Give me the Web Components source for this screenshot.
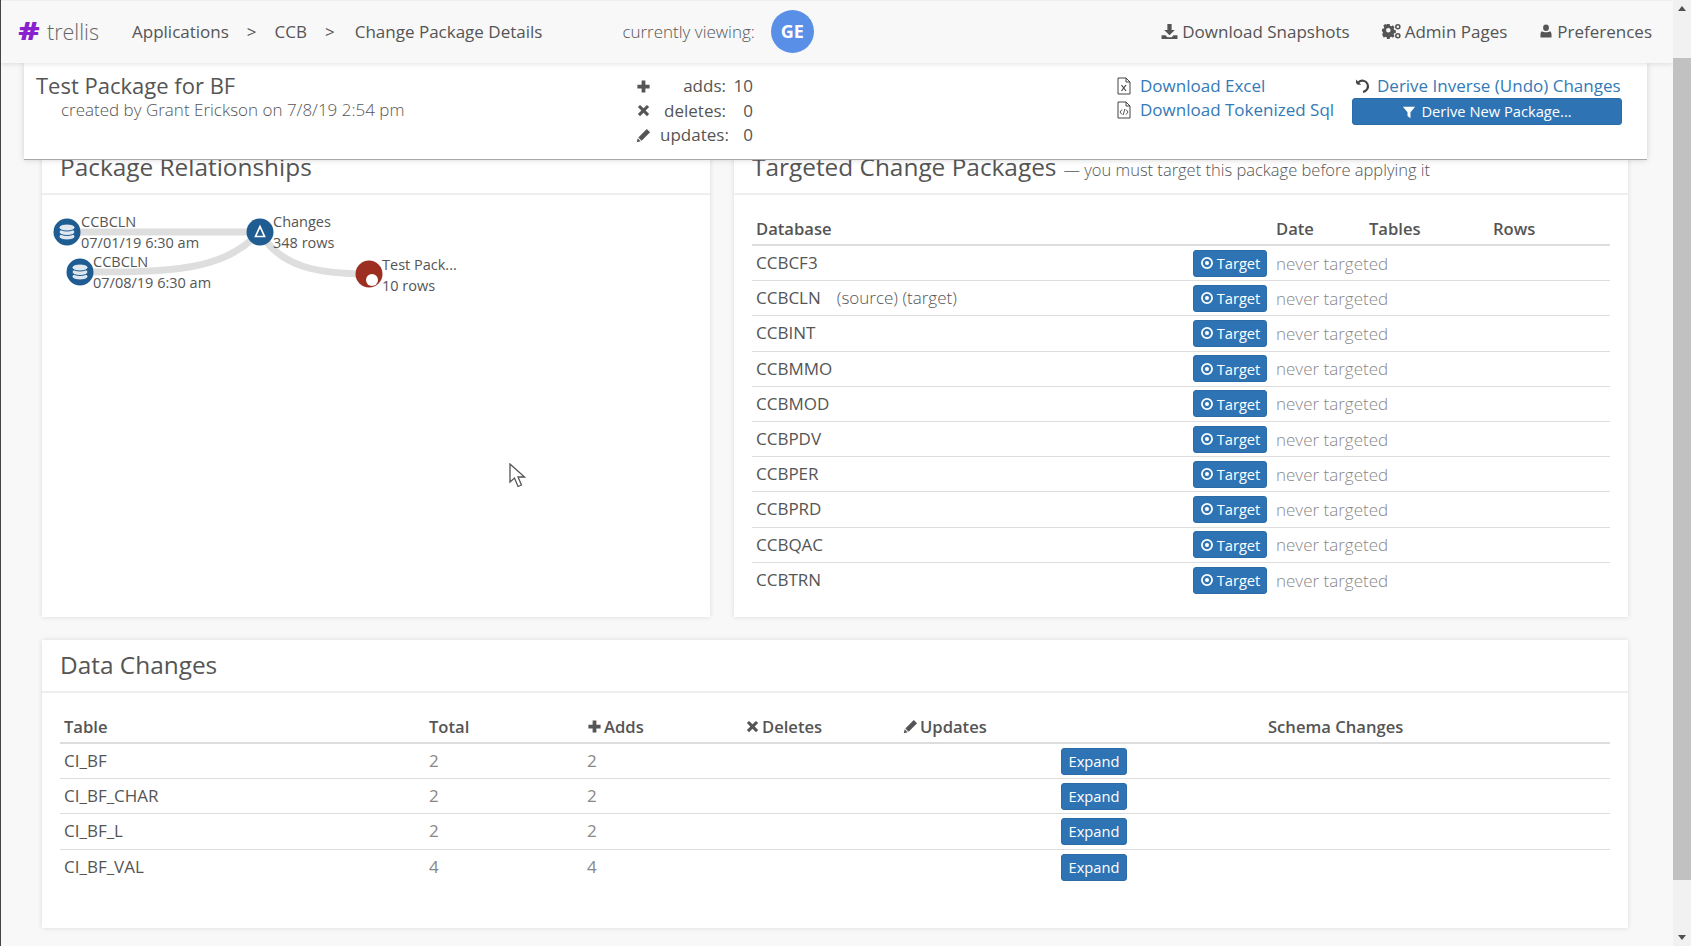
<!DOCTYPE html>
<html>
<head>
<meta charset="utf-8">
<title>Change Package Details</title>
<style>
  html, body { margin: 0; height: 100%; overflow: hidden; }
  body { background: #f8f8f8; font-family: "Open Sans", sans-serif; color: #555; }
</style>
</head>
<body>
<trellis-app></trellis-app>

<script>
const ICONS = {
  plus: `<svg viewBox="0 0 16 16"><path d="M6 1.5h4V6h4.5v4H10v4.5H6V10H1.500V6H6z"/></svg>`,
  times: `<svg viewBox="0 0 16 16"><path d="M4.300 2 8 5.700 11.700 2 14 4.300 10.300 8 14 11.700 11.700 14 8 10.300 4.300 14 2 11.700 5.700 8 2 4.300z"/></svg>`,
  pencil: `<svg viewBox="0 0 16 16"><path d="M11.500 1 15 4.500 6 13.500 2.500 10zM1.800 11 5 14.200.8 15.200z"/></svg>`,
  download: `<svg viewBox="0 0 16 16"><path d="M6 1h4v5.500h3L8 11.500 3 6.500h3zM.5 11.500h3.700L6 13.300h4l1.800-1.800h3.700V15H.5z"/></svg>`,
  gears: `<svg viewBox="0 0 18 16"><path fill-rule="evenodd" d="M5 3h2.600l.4 1.700 1.300.6 1.500-.9 1.700 1.800-.9 1.500.5 1.200 1.700.5v2.500l-1.700.4-.5 1.200.9 1.500-1.700 1.700-1.500-.9-1.300.5-.4 1.700H5l-.4-1.700-1.300-.5-1.500.9L.1 13.600l.9-1.500-.5-1.200L0 10.400V8l1.700-.5.5-1.200-.9-1.500L3 3l1.500.9zm1.300 4a2.200 2.200 0 1 0 0 4.500 2.200 2.200 0 0 0 0-4.500z" transform="translate(0 -2) scale(.95)"/><circle cx="15" cy="3.500" r="1.900" fill="none" stroke="currentColor" stroke-width="1.500"/><circle cx="15" cy="12" r="1.900" fill="none" stroke="currentColor" stroke-width="1.500"/></svg>`,
  user: `<svg viewBox="0 0 16 16"><ellipse cx="8" cy="4.300" rx="3.300" ry="3.800"/><path d="M3.500 8.300c1 .8 2.700 1.200 4.500 1.200s3.500-.4 4.500-1.200c1.200.5 1.800 2 1.800 3.700v3.500H1.700V12c0-1.700.6-3.200 1.800-3.700z"/></svg>`,
  undo: `<svg viewBox="0 0 16 16"><path d="M1 1.500 6.200 6.700H2.700L1 5z"/><path d="M3.500 4.200A5.600 5.600 0 1 1 8 13.800" fill="none" stroke="currentColor" stroke-width="2.200"/></svg>`,
  filter: `<svg viewBox="0 0 16 16"><path d="M1 2h14L9.700 8.300V15L6.300 12.500V8.300z"/></svg>`,
  target: `<svg viewBox="0 0 16 16"><circle cx="8" cy="8" r="5.800" fill="none" stroke="currentColor" stroke-width="2"/><circle cx="8" cy="8" r="2.300"/></svg>`,
  excel: `<svg viewBox="0 0 14 18"><path d="M1 1h8l4 4v12H1z" fill="none" stroke="currentColor"/><path d="M9 1v4h4" fill="none" stroke="currentColor"/><path d="M4.500 8l4.500 6M9 8l-4.500 6" fill="none" stroke="currentColor" stroke-width="1.200"/></svg>`,
  code: `<svg viewBox="0 0 14 18"><path d="M1 1h8l4 4v12H1z" fill="none" stroke="currentColor"/><path d="M9 1v4h4" fill="none" stroke="currentColor"/><path d="M5 8.500 3 11l2 2.500M9 8.500l2 2.500-2 2.500M7.800 8 6.200 14" fill="none" stroke="currentColor" stroke-width=".9"/></svg>`
};

class AppIcon extends HTMLElement {
  connectedCallback() {
    if (this.shadowRoot) return;
    const size = this.getAttribute("size") || 16;
    this.attachShadow({ mode: "open" }).innerHTML = `
      <style>
        :host { display: inline-flex; width: ${size}px; height: ${size}px; flex: none; }
        svg { width: 100%; height: 100%; fill: currentColor; display: block; }
      </style>
      ${ICONS[this.getAttribute("name")]}`;
  }
}

class BlueButton extends HTMLElement {
  constructor() {
    super();
    this.attachShadow({ mode: "open" }).innerHTML = `
      <style>
        :host {
          display: inline-flex; align-items: center; justify-content: center; gap: 3px;
          box-sizing: border-box; height: 27px; background: #2e74b5; border: 1px solid #2a6ba8;
          border-radius: 3px; color: #fff; font-size: 14.700px; white-space: nowrap;
        }
      </style>
      <slot></slot>`;
  }
}

class TopNav extends HTMLElement {
  constructor() {
    super();
    this.attachShadow({ mode: "open" }).innerHTML = `
      <style>
        :host {
          display: flex; align-items: center; height: 63px; box-sizing: border-box;
          padding: 0 21px 2px 18px; background: #f8f8f8; color: #555; font-size: 17px;
          border-top: 1px solid #eee; box-shadow: 0 1px 5px rgba(0,0,0,.12);
          position: relative; z-index: 3;
        }
        .hash { color: #8a1fd0; font-weight: 800; font-size: 24px; line-height: 1; width: 20px; text-align: center; transform: scaleX(1.35); }
        .name { margin-left: 8px; font-size: 21.500px; font-weight: 300; color: #666; width: 85px; }
        .crumbs { display: flex; }
        .sep { margin: 0 18px; }
        .sep + span + .sep { margin-right: 20px; }
        .viewing { margin-left: 80px; font-weight: 300; }
        .avatar {
          width: 43px; height: 43px; border-radius: 50%; background: #5a8fe8; color: #fff; margin-left: 16px;
          display: flex; align-items: center; justify-content: center; font-weight: 700; font-size: 18px;
        }
        .right { margin-left: auto; display: flex; gap: 32px; }
        .right span { display: inline-flex; align-items: center; gap: 4px; }
      </style>
      <span class="hash">#</span><span class="name">trellis</span>
      <span class="crumbs">
        <span>Applications</span><span class="sep">&gt;</span><span>CCB</span><span class="sep">&gt;</span><span>Change Package Details</span>
      </span>
      <span class="viewing">currently viewing:</span>
      <span class="avatar">GE</span>
      <span class="right">
        <span><app-icon name="download" size="17"></app-icon>Download Snapshots</span>
        <span><app-icon name="gears" size="19"></app-icon>Admin Pages</span>
        <span><app-icon name="user" size="14"></app-icon>Preferences</span>
      </span>`;
  }
}

class PackageSummary extends HTMLElement {
  constructor() {
    super();
    this.attachShadow({ mode: "open" }).innerHTML = `
      <style>
        :host {
          display: grid; grid-template-columns: 600px 480px 236px 270px; align-content: start;
          box-sizing: border-box; height: 97px; margin: 0 26px 0 23px; padding: 11px 0 0 12px;
          background: #fff; border-bottom: 1px solid #aaa; box-shadow: 0 0 6px rgba(0,0,0,.16);
          position: relative; z-index: 2; font-size: 17px; line-height: 24.500px;
        }
        h1 { margin: 0; font-size: 22px; font-weight: 400; color: #555; line-height: 23px; }
        p { margin: 1px 0 0 25px; font-weight: 300; color: #555; }
        .stats { display: grid; grid-template-columns: 24px 66px 27px; justify-content: start; text-align: right; }
        .stats app-icon { align-self: center; }
        .links a { display: flex; align-items: center; gap: 6px; color: #337ab7; white-space: nowrap; height: 24px; }
        .links a app-icon { color: #444; margin-left: -1px; margin-right: 1px; }
        .undo { gap: 6px !important; padding-left: 3px; }
        .undo app-icon { margin: 0 !important; }
        blue-button { width: 270px; display: flex; gap: 5px; }
      </style>
      <div><h1>Test Package for BF</h1><p>created by Grant Erickson on 7/8/19 2:54 pm</p></div>
      <div class="stats">
        <app-icon name="plus" size="15"></app-icon><span>adds:</span><span>10</span>
        <app-icon name="times" size="15"></app-icon><span>deletes:</span><span>0</span>
        <app-icon name="pencil" size="15"></app-icon><span>updates:</span><span>0</span>
      </div>
      <div class="links">
        <a><app-icon name="excel" size="18"></app-icon>Download Excel</a>
        <a><app-icon name="code" size="18"></app-icon>Download Tokenized Sql</a>
      </div>
      <div class="links">
        <a class="undo"><app-icon name="undo" size="16"></app-icon>Derive Inverse (Undo) Changes</a>
        <blue-button><app-icon name="filter" size="14"></app-icon>Derive New Package...</blue-button>
      </div>`;
  }
}

class PanelCard extends HTMLElement {
  constructor() {
    super();
    this.attachShadow({ mode: "open" }).innerHTML = `
      <style>
        :host {
          display: block; box-sizing: border-box; background: #fff; overflow: hidden;
          box-shadow: 0 0 5px rgba(0,0,0,.12);
        }
        header {
          height: 53px; box-sizing: border-box; padding: 0 18px 2px; border-bottom: 2px solid #eee;
          display: flex; align-items: center; gap: 7px; color: #555; font-size: 24.400px; font-weight: 400;
        }
        ::slotted([slot=note]) { font-size: 16.500px; font-weight: 300; color: #555; padding-top: 5px; }
      </style>
      <header><slot name="title"></slot><slot name="note"></slot></header>
      <slot></slot>`;
  }
}

class RelationshipGraph extends HTMLElement {
  constructor() {
    super();
    const db = (x, y) => `
      <circle cx="${x}" cy="${y}" r="13.500" fill="#1f5c92"/>
      <g fill="#dfe8f0" stroke="#1f5c92" stroke-width="1">
        <ellipse cx="${x}" cy="${y + 4.500}" rx="8" ry="3.500"/>
        <ellipse cx="${x}" cy="${y}" rx="8" ry="3.500"/>
        <ellipse cx="${x}" cy="${y - 4.500}" rx="8" ry="3.500"/>
      </g>`;
    const label = (x, y, a, b) => `<div class="label" style="left:${x}px;top:${y}px"><div>${a}</div><div>${b}</div></div>`;
    this.attachShadow({ mode: "open" }).innerHTML = `
      <style>
        :host { display: block; position: relative; height: 420px; font-size: 14.500px; color: #555; }
        svg { position: absolute; left: 0; top: 0; width: 100%; height: 100%; }
        .label { position: absolute; line-height: 20.500px; white-space: nowrap; }
      </style>
      <svg viewBox="42 195 668 420">
        <g fill="none" stroke="#dedede" stroke-width="7">
          <path d="M66 232H260"/>
          <path d="M80 272C170 272 222 272 260 232"/>
          <path d="M260 232C280 268 320 274 369 274"/>
        </g>
        ${db(67, 232)}
        ${db(80, 272)}
        <circle cx="260" cy="232" r="13.500" fill="#1f5c92"/>
        <path d="M260 226.500 255.500 236.500H264.500Z" fill="none" stroke="#fff" stroke-width="1.700"/>
        <circle cx="369" cy="274" r="13.500" fill="#9c2f22"/>
        <circle cx="372" cy="280" r="6" fill="#fff"/>
      </svg>
      ${label(39, 17, "CCBCLN", "07/01/19 6:30 am")}
      ${label(51, 57, "CCBCLN", "07/08/19 6:30 am")}
      ${label(231, 17, "Changes", "348 rows")}
      ${label(340, 60, "Test Pack...", "10 rows")}`;
  }
}

const TARGET_DBS = [
  ["CCBCF3"], ["CCBCLN", "(source) (target)"], ["CCBINT"], ["CCBMMO"], ["CCBMOD"],
  ["CCBPDV"], ["CCBPER"], ["CCBPRD"], ["CCBQAC"], ["CCBTRN"]
];

class TargetTable extends HTMLElement {
  constructor() {
    super();
    const rows = TARGET_DBS.map(([name, note]) => `
      <div class="row">
        <span class="name">${name}${note ? `<em>${note}</em>` : ""}</span>
        <blue-button><app-icon name="target" size="14"></app-icon>Target</blue-button>
        <span class="never">never targeted</span>
      </div>`).join("");
    this.attachShadow({ mode: "open" }).innerHTML = `
      <style>
        :host { display: block; margin: 16px 18px 0; font-size: 17px; color: #555; }
        .head, .row { display: grid; grid-template-columns: 441px 83px 93px 124px 1fr; align-items: center; }
        .head { height: 35px; box-sizing: border-box; padding-top: 1px; font-size: 16.600px; font-weight: 600; border-bottom: 2px solid #ddd; }
        .head span:first-child { padding-left: 4px; }
        .row { height: 35.200px; box-sizing: border-box; border-bottom: 1px solid #ddd; }
        .row:last-child { border-bottom: 0; }
        .name { padding-left: 4px; padding-bottom: 1px; }
        em { font-style: normal; font-weight: 300; margin-left: 16px; }
        .never { grid-column: 3 / 6; color: #888; font-size: 17px; font-weight: 300; }
        blue-button { width: 74px; margin-left: 0; }
      </style>
      <div class="head"><span>Database</span><span></span><span>Date</span><span>Tables</span><span>Rows</span></div>
      ${rows}`;
  }
}

const CHANGE_ROWS = [["CI_BF", 2, 2], ["CI_BF_CHAR", 2, 2], ["CI_BF_L", 2, 2], ["CI_BF_VAL", 4, 4]];

class ChangesTable extends HTMLElement {
  constructor() {
    super();
    const rows = CHANGE_ROWS.map(([name, total, adds]) => `
      <div class="row">
        <span class="name">${name}</span><span class="num">${total}</span><span class="num">${adds}</span><span></span><span></span>
        <blue-button>Expand</blue-button>
      </div>`).join("");
    this.attachShadow({ mode: "open" }).innerHTML = `
      <style>
        :host { display: block; margin: 16px 18px 0; font-size: 17px; color: #555; }
        .head, .row { display: grid; grid-template-columns: 369px 158px 158px 158px 158px 207px 1fr; align-items: center; }
        .head { height: 35px; box-sizing: border-box; padding-top: 1px; font-size: 16.600px; font-weight: 600; border-bottom: 2px solid #ddd; }
        .head span { display: inline-flex; align-items: center; gap: 2px; }
        .head span:first-child { padding-left: 4px; }
        .row { height: 35.200px; box-sizing: border-box; border-bottom: 1px solid #ddd; }
        .row:last-child { border-bottom: 0; }
        .name { padding-left: 4px; padding-bottom: 1px; }
        .num { color: #888; padding-bottom: 1px; }
        blue-button { width: 66px; }
      </style>
      <div class="head">
        <span>Table</span><span>Total</span>
        <span><app-icon name="plus" size="15"></app-icon>Adds</span>
        <span><app-icon name="times" size="15"></app-icon>Deletes</span>
        <span><app-icon name="pencil" size="15"></app-icon>Updates</span>
        <span></span><span>Schema Changes</span>
      </div>
      ${rows}`;
  }
}

class FakeScrollbar extends HTMLElement {
  constructor() {
    super();
    this.attachShadow({ mode: "open" }).innerHTML = `
      <style>
        :host { display: flex; flex-direction: column; width: 18px; flex: none; height: 100%; background: #f1f1f1; }
        .btn { height: 17px; display: flex; align-items: center; justify-content: center; }
        .up { border-left: 4px solid transparent; border-right: 4px solid transparent; border-bottom: 5px solid #505050; }
        .down { border-left: 4px solid transparent; border-right: 4px solid transparent; border-top: 5px solid #505050; }
        .track { flex: 1; padding-top: 41px; padding-bottom: 49px; display: flex; }
        .thumb { flex: 1; background: #c1c1c1; }
      </style>
      <div class="btn"><i class="up"></i></div>
      <div class="track"><div class="thumb"></div></div>
      <div class="btn"><i class="down"></i></div>`;
  }
}

class MouseCursor extends HTMLElement {
  constructor() {
    super();
    this.attachShadow({ mode: "open" }).innerHTML = `
      <style>
        :host { position: absolute; left: 508px; top: 463px; width: 17px; height: 25px; z-index: 5; }
        svg { width: 100%; height: 100%; }
      </style>
      <svg viewBox="0 0 17 25"><path d="M1 1V19L5.500 15 9 23.500 12.500 22 9 14H15.500Z" fill="#fff" stroke="#555" stroke-width="1.300"/></svg>`;
  }
}

class TrellisApp extends HTMLElement {
  constructor() {
    super();
    this.attachShadow({ mode: "open" }).innerHTML = `
      <style>
        :host { display: flex; height: 100vh; box-sizing: border-box; border-left: 1px solid #444; position: relative; background: #f8f8f8; }
        main { flex: 1; min-width: 0; display: flex; flex-direction: column; overflow: hidden; }
        .panels { display: grid; grid-template-columns: 668px 894px; gap: 24px; margin: -18px 0 0 41px; position: relative; z-index: 1; }
        .panels panel-card { height: 475px; }
        .data { margin: 23px 0 0 41px; width: 1586px; height: 288px; }
      </style>
      <main>
        <top-nav></top-nav>
        <package-summary></package-summary>
        <div class="panels">
          <panel-card>
            <span slot="title">Package Relationships</span>
            <relationship-graph></relationship-graph>
          </panel-card>
          <panel-card>
            <span slot="title">Targeted Change Packages</span>
            <span slot="note">— you must target this package before applying it</span>
            <target-table></target-table>
          </panel-card>
        </div>
        <panel-card class="data">
          <span slot="title">Data Changes</span>
          <changes-table></changes-table>
        </panel-card>
      </main>
      <fake-scrollbar></fake-scrollbar>
      <mouse-cursor></mouse-cursor>`;
  }
}

customElements.define("app-icon", AppIcon);
customElements.define("blue-button", BlueButton);
customElements.define("top-nav", TopNav);
customElements.define("package-summary", PackageSummary);
customElements.define("panel-card", PanelCard);
customElements.define("relationship-graph", RelationshipGraph);
customElements.define("target-table", TargetTable);
customElements.define("changes-table", ChangesTable);
customElements.define("fake-scrollbar", FakeScrollbar);
customElements.define("mouse-cursor", MouseCursor);
customElements.define("trellis-app", TrellisApp);
</script>
</body>
</html>
